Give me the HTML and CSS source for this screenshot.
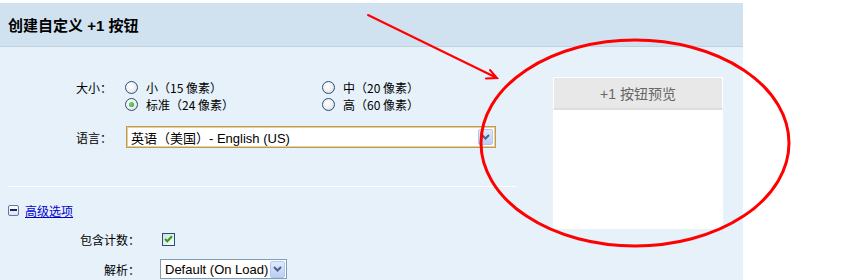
FILE: index.html
```html
<!DOCTYPE html>
<html lang="zh-CN">
<head>
<meta charset="utf-8">
<title>创建自定义 +1 按钮</title>
<link rel="stylesheet" href="styles.css">
</head>
<body>
<div class="page">
  <div class="panel">
    <div class="header">创建自定义 +1 按钮</div>
    <div class="content">
      <div class="form">
        <div class="field field-size">
          <div class="label">大小：</div>
          <div class="options">
            <div class="opt"><span class="radio"></span>小（15 像素）</div>
            <div class="opt"><span class="radio"></span>中（20 像素）</div>
            <div class="opt"><span class="radio checked"></span>标准（24 像素）</div>
            <div class="opt"><span class="radio"></span>高（60 像素）</div>
          </div>
        </div>
        <div class="field field-lang">
          <div class="label">语言：</div>
          <div class="select select-lang">
            <span class="select-text">英语（美国）- English (US)</span>
            <span class="select-btn"><svg width="9" height="6" viewBox="0 0 9 6"><path d="M1 1 L4.5 4.5 L8 1" fill="none" stroke="#4d5f86" stroke-width="2"/></svg></span>
          </div>
        </div>
        <div class="divider"></div>
        <div class="toggle"><span class="minus-icon"><span class="minus-bar"></span></span><a class="toggle-link" href="#">高级选项</a></div>
        <div class="field2 field-count">
          <div class="label2">包含计数：</div>
          <span class="checkbox"><svg width="9" height="8" viewBox="0 0 9 8"><path d="M1 4 L3.3 6.3 L8 1.2" fill="none" stroke="#21a121" stroke-width="2"/></svg></span>
        </div>
        <div class="field2 field-parse">
          <div class="label2">解析：</div>
          <div class="select select-parse">
            <span class="select-text">Default (On Load)</span>
            <span class="select-btn"><svg width="9" height="6" viewBox="0 0 9 6"><path d="M1 1 L4.5 4.5 L8 1" fill="none" stroke="#4d5f86" stroke-width="2"/></svg></span>
          </div>
        </div>
      </div>
      <div class="preview">
        <div class="preview-head">+1 按钮预览</div>
        <div class="preview-body"></div>
      </div>
    </div>
  </div>
  <svg class="annotation" width="851" height="280" viewBox="0 0 851 280">
    <ellipse cx="635" cy="143" rx="154" ry="103" fill="none" stroke="#ff0000" stroke-width="3"/>
    <path d="M368 15 L497 78 M486 78.5 L497 78 L490 70" fill="none" stroke="#ff0000" stroke-width="2" stroke-linecap="round"/>
  </svg>
</div>
</body>
</html>
```

FILE: styles.css
```css
html, body {
  margin: 0;
  padding: 0;
  background: #ffffff;
}
body {
  font-family: "Noto Sans CJK SC", "Liberation Sans", sans-serif;
  font-size: 12px;
  color: #000;
}
.page {
  position: relative;
  width: 851px;
  height: 280px;
  overflow: hidden;
}
.panel {
  width: 743px;
  margin-top: 3px;
}
.header {
  height: 43px;
  background: #d0e2f0;
  border-bottom: 1px solid #c2d1de;
  display: flex;
  align-items: center;
  padding-left: 8px;
  font-size: 15px;
  font-weight: bold;
  font-family: "Liberation Sans", "Noto Sans CJK SC", sans-serif;
}
.content {
  background: #e6f1fa;
  display: flex;
  min-height: 240px;
}
.form {
  width: 508px;
  padding-left: 8px;
  padding-top: 32px;
}
.field {
  display: flex;
  padding-left: 68px;
}
.label {
  width: 49px;
  line-height: 17px;
}
.options {
  display: grid;
  grid-template-columns: 197px auto;
  grid-auto-rows: 17px;
}
.opt {
  display: flex;
  align-items: center;
  line-height: 17px;
}
.radio {
  width: 11px;
  height: 11px;
  border: 1px solid #2d4f78;
  border-radius: 50%;
  background: radial-gradient(circle at 40% 40%, #ffffff 0%, #eef0f2 50%, #c9ced4 100%);
  margin-right: 8px;
  position: relative;
  flex: none;
}
.radio.checked::after {
  content: "";
  position: absolute;
  left: 3px;
  top: 3px;
  width: 5px;
  height: 5px;
  border-radius: 50%;
  background: radial-gradient(circle at 40% 40%, #6ee06e, #1f9a1f);
}
.field-lang {
  margin-top: 13px;
  align-items: center;
}
.field-lang .label {
  width: 50px;
}
.select {
  display: flex;
  align-items: center;
  background: #fff;
  box-sizing: border-box;
}
.select-lang {
  width: 370px;
  height: 22px;
  border: 1px solid #c29b50;
  box-shadow: inset 0 0 0 1px #e7cf9c;
  padding: 0 2px 0 4px;
}
.select-text {
  flex: 1;
  font-size: 13px;
  font-family: "Liberation Sans", "Noto Sans CJK SC", sans-serif;
  white-space: nowrap;
}
.select-btn {
  width: 15px;
  height: 16px;
  background: linear-gradient(#dfeafd, #b9cff5);
  border: 1px solid #b5c8ec;
  border-radius: 2px;
  box-sizing: border-box;
  display: flex;
  align-items: center;
  justify-content: center;
}
.divider {
  width: 508px;
  height: 1px;
  background: #ffffff;
  margin-top: 38px;
}
.toggle {
  margin-top: 15px;
  display: flex;
  align-items: center;
  height: 16px;
}
.minus-icon {
  width: 9px;
  height: 9px;
  border: 1px solid #6a72aa;
  border-radius: 2px;
  background: linear-gradient(#ffffff, #dde2ef);
  display: flex;
  align-items: center;
  justify-content: center;
  margin-right: 6px;
}
.minus-bar {
  width: 7px;
  height: 2px;
  background: #1b2360;
}
.toggle-link {
  color: #0000cc;
  text-decoration: underline;
}
.field2 {
  display: flex;
  align-items: center;
}
.label2 {
  width: 132px;
  text-align: right;
  margin-right: 20px;
}
.field-count {
  margin-top: 13px;
  height: 16px;
}
.checkbox {
  width: 11px;
  height: 11px;
  border: 1px solid #1c5180;
  background: linear-gradient(135deg, #dcdcd5, #fbfbf9);
  margin-left: 2px;
  display: flex;
  align-items: center;
  justify-content: center;
}
.field-parse {
  margin-top: 12px;
}
.select-parse {
  width: 127px;
  height: 20px;
  border: 1px solid #7f9db9;
  padding: 0 1px 0 4px;
}
.select-parse .select-btn {
  height: 17px;
}
.preview {
  width: 170px;
  margin-top: 30px;
  margin-left: 37px;
  height: 152px;
  background: #fff;
  display: flex;
  flex-direction: column;
}
.preview-head {
  height: 30px;
  background: #e8e8e8;
  border-top: 1px solid #ffffff;
  border-left: 1px solid #fff;
  border-right: 1px solid #fff;
  border-bottom: 2px solid #dedede;
  display: flex;
  align-items: center;
  justify-content: center;
  font-size: 14px;
  color: #666;
  font-family: "Liberation Sans", "Noto Sans CJK SC", sans-serif;
}
.preview-body {
  flex: 1;
}
.annotation {
  position: absolute;
  left: 0;
  top: 0;
  pointer-events: none;
}
```
